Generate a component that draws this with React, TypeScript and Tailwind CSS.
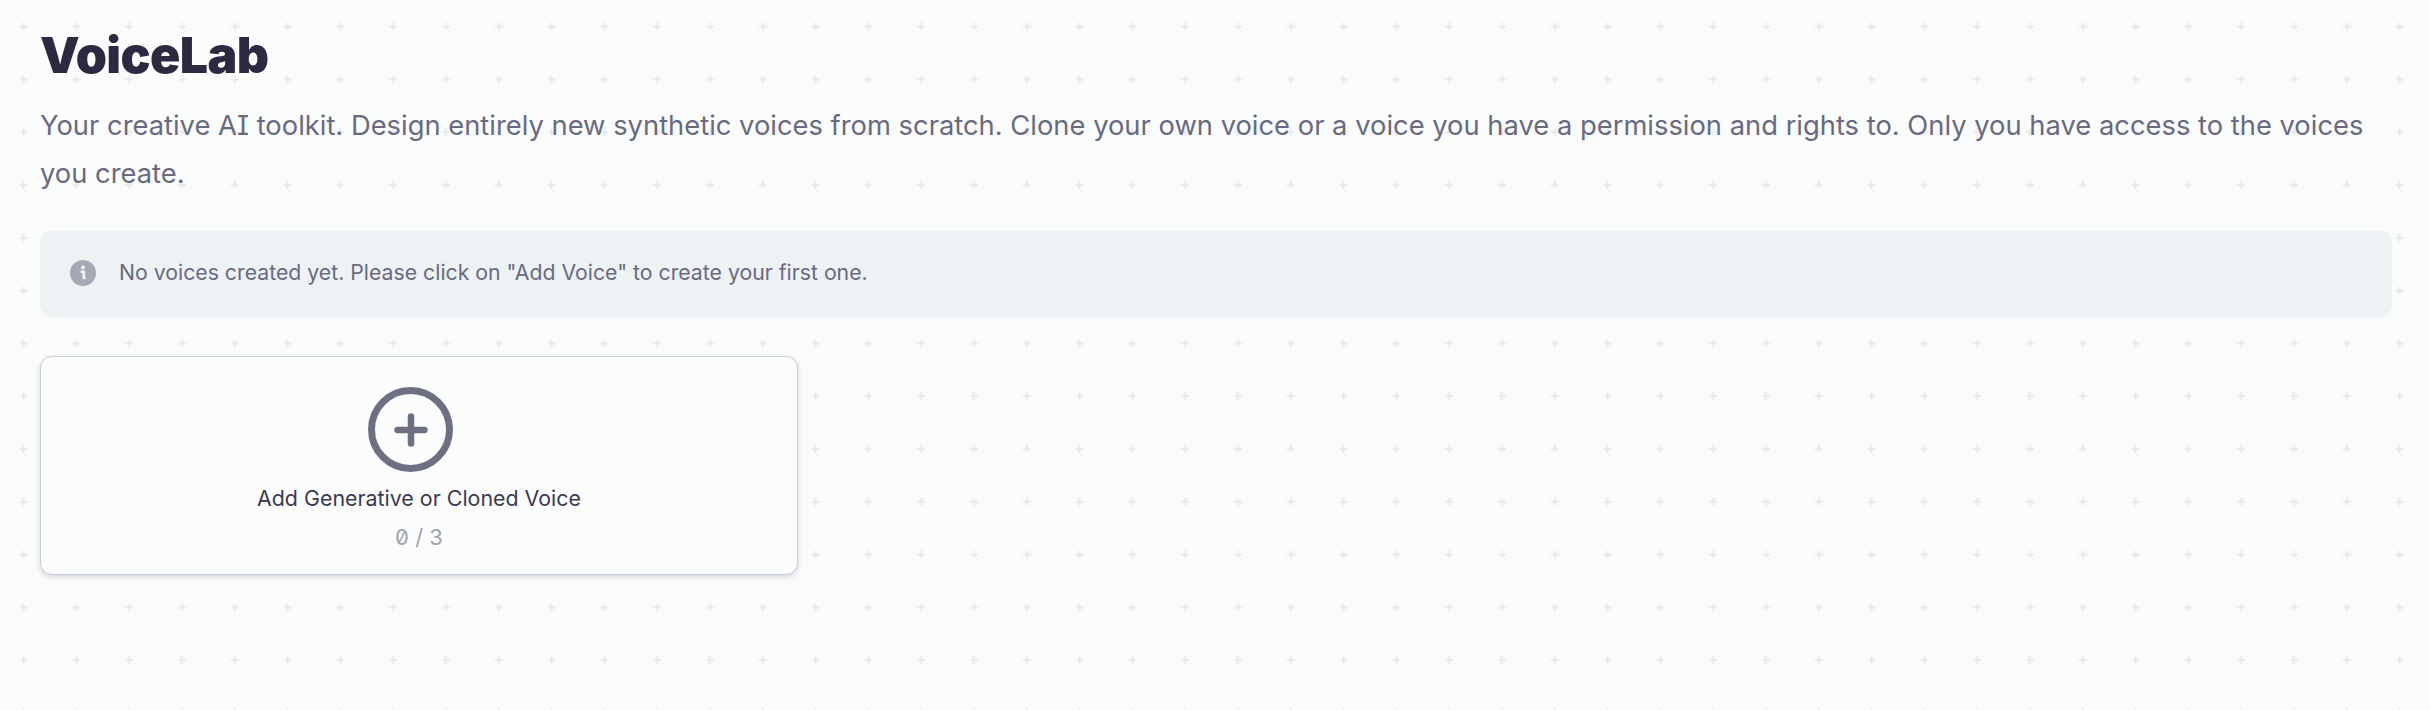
import { Plus } from 'lucide-react';

function DotGrid() {
  return (
    <svg className="absolute inset-0 h-full w-full" aria-hidden="true">
      <defs>
        <pattern id="plus-grid" x="-2.9" y="-0.3" width="52.8" height="52.8" patternUnits="userSpaceOnUse">
          <path d="M26.5 23v8M22.5 27h8" stroke="#e6e8eb" strokeWidth="1.8" fill="none" />
        </pattern>
      </defs>
      <rect width="100%" height="100%" fill="url(#plus-grid)" />
    </svg>
  );
}

function InfoDot() {
  return (
    <svg width="26" height="26" viewBox="0 0 26 26" className="shrink-0">
      <circle cx="13" cy="13" r="13" fill="#a6a8b5" />
      <circle cx="13" cy="7.6" r="2" fill="#edf2f5" />
      <path d="M10.6 11.8h3.2v6.2h1.8" stroke="#edf2f5" strokeWidth="2.6" fill="none" />
    </svg>
  );
}

export default function App() {
  return (
    <div className="relative h-[710px] w-full overflow-hidden bg-[#fafcfb] font-['Inter',sans-serif] [font-feature-settings:'cv08','zero']">
      <DotGrid />
      <div className="relative flex flex-col px-10 pr-[38px] pt-[26px]">
        <h1 className="text-[50px] font-black leading-[58px] tracking-[-0.6px] text-[#2d2940]">VoiceLab</h1>
        <p className="mt-[18px] text-[27.35px] leading-[48px] text-[#696a80]">
          Your creative AI toolkit. Design entirely new synthetic voices from scratch. Clone your own voice or a voice
          you have a permission and rights to. Only you have access to the voices you create.
        </p>

        <div className="mt-[33px] flex h-[86px] items-center gap-[23px] rounded-xl bg-[#edf2f5] pb-[2px] pl-[30px]">
          <InfoDot />
          <span className="text-[21.25px] text-[#696a80]">No voices created yet. Please click on "Add Voice" to create your first one.</span>
        </div>

        <button className="mt-[39px] flex h-[219px] w-[758px] flex-col items-center rounded-xl border border-[#c9ccda] bg-[#fbfcfc] pt-[30px] shadow-[0_2px_5px_rgba(60,60,90,0.2)]">
          <span className="mr-[17px] flex h-[85px] w-[85px] items-center justify-center rounded-full border-[7px] border-[#6f6f84] text-[#6f6f84]">
            <Plus size={46} strokeWidth={3.4} />
          </span>
          <span className="mt-[10px] text-[21.4px] leading-[32px] text-[#3c3a50]">Add Generative or Cloned Voice</span>
          <span className="mt-[7px] text-[22px] leading-[32px] text-[#a0a2b0]">0 / 3</span>
        </button>
      </div>
    </div>
  );
}
